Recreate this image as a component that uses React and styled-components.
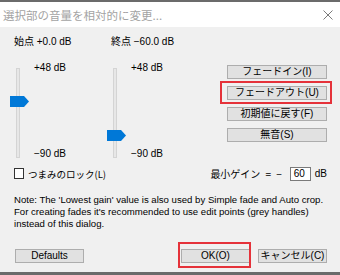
import styled, { createGlobalStyle } from 'styled-components'

const GlobalStyle = createGlobalStyle`
html, body {
  margin: 0;
  padding: 0;
  background: #ffffff;
}
* { box-sizing: border-box; }
`

const Window = styled.div`
width: 340px;
height: 275px;
display: flex;
flex-direction: column;
border-top: 2px solid #6b6b6b;
border-bottom: 3px solid #6b6b6b;
background: #f0f0f0;
font-family: "Liberation Sans", "Noto Sans CJK JP", sans-serif;
font-size: 10px;
color: #000;
overflow: hidden;
`

const TitleBar = styled.div`
height: 25px;
flex: none;
background: #ffffff;
display: flex;
align-items: center;
justify-content: space-between;
padding: 0 7px 0 3px;
color: #a3a3a3;
font-family: "Noto Sans CJK JP", sans-serif;
font-size: 11.5px;
`

const Content = styled.div`
flex: 1;
display: flex;
flex-direction: column;
padding: 8px 13px 0 10px;
`

const TopArea = styled.div`
display: flex;
`

const SliderGroup = styled.div`
width: 97px;
display: flex;
flex-direction: column;
`

const SliderLabel = styled.div`
height: 14px;
line-height: 14px;
padding-left: 4px;
margin-bottom: 12px;
white-space: nowrap;
`

const SliderBody = styled.div`
position: relative;
height: 100px;
display: flex;
`

const TrackColumn = styled.div`
position: relative;
width: 24px;
height: 100%;
`

const Track = styled.div`
position: absolute;
left: 6px;
top: 7px;
bottom: 3px;
width: 4px;
background: #e7e7e7;
border: 1px solid #d4d4d4;
`

const Thumb = styled.svg`
position: absolute;
left: 0;
`

const Scale = styled.div`
display: flex;
flex-direction: column;
justify-content: space-between;
& span {
  line-height: 14px;
  height: 14px;
}
`

const ButtonColumn = styled.div`
margin-left: auto;
margin-top: 30px;
width: 100px;
display: flex;
flex-direction: column;
gap: 7px;
`

const Button = styled.button`
position: relative;
height: 14px;
width: ${(p) => p.width || '100%'};
padding: 0;
background: #e1e1e1;
border: 1px solid #adadad;
font-family: "Liberation Sans", "Noto Sans CJK JP", sans-serif;
font-size: 10px;
line-height: 12px;
color: #000;
&::after {
  content: '';
  display: ${(p) => (p.marked ? 'block' : 'none')};
  position: absolute;
  top: ${(p) => p.mt || '-6px'};
  left: ${(p) => p.ml || '-8px'};
  right: ${(p) => p.mr || '-6px'};
  bottom: ${(p) => p.mb || '-5px'};
  border: 2px solid #e5323a;
}
`

const OptionRow = styled.div`
display: flex;
align-items: center;
margin-top: 5px;
height: 15px;
`

const Check = styled.label`
display: flex;
align-items: center;
gap: 4px;
padding-left: 4px;
font-family: "Noto Sans CJK JP", sans-serif;
font-size: 9.5px;
& span.box {
  width: 10px;
  height: 11px;
  border: 1px solid #333;
  background: #fff;
}
`

const Gain = styled.div`
margin-left: auto;
display: flex;
align-items: center;
gap: 4px;
& span.jp {
  font-family: "Noto Sans CJK JP", sans-serif;
  word-spacing: 3px;
}
`

const GainInput = styled.div`
width: 21px;
height: 14px;
border: 1px solid #7a7a7a;
background: #fff;
padding-left: 3px;
line-height: 12px;
margin-left: 4px;
`

const Note = styled.p`
margin: 13px 0 0 4px;
font-size: 9.6px;
line-height: 12px;
white-space: nowrap;
`

const BottomRow = styled.div`
display: flex;
align-items: center;
margin-top: auto;
margin-bottom: 9px;
padding-left: 5px;
& > :first-child {
  margin-right: auto;
}
`

const Close = () => (
  <svg width="10" height="10" viewBox="0 0 10 10">
    <path d="M0.5 0.5 L9.5 9.5 M9.5 0.5 L0.5 9.5" stroke="#7a7a7a" strokeWidth="1" />
  </svg>
)

const Slider = ({ label, thumbTop }) => (
  <SliderGroup>
    <SliderLabel>{label}</SliderLabel>
    <SliderBody>
      <TrackColumn>
        <Track />
        <Thumb width="19" height="11" viewBox="0 0 19 11" style={{ top: thumbTop }}>
          <path d="M0 0 H14 L19 5.5 L14 11 H0 Z" fill="#0078d7" />
        </Thumb>
      </TrackColumn>
      <Scale>
        <span>+48 dB</span>
        <span>−90 dB</span>
      </Scale>
    </SliderBody>
  </SliderGroup>
)

export default function App() {
  return (
    <Window>
      <GlobalStyle />
      <TitleBar>
        <span>選択部の音量を相対的に変更...</span>
        <Close />
      </TitleBar>
      <Content>
        <TopArea>
          <Slider label="始点 +0.0 dB" thumbTop={35} />
          <Slider label="終点 −60.0 dB" thumbTop={69} />
          <ButtonColumn>
            <Button>フェードイン(I)</Button>
            <Button marked>フェードアウト(U)</Button>
            <Button>初期値に戻す(F)</Button>
            <Button>無音(S)</Button>
          </ButtonColumn>
        </TopArea>
        <OptionRow>
          <Check>
            <span className="box" />
            つまみのロック(L)
          </Check>
          <Gain>
            <span className="jp">最小ゲイン = −</span>
            <GainInput>60</GainInput>
            <span>dB</span>
          </Gain>
        </OptionRow>
        <Note>
          Note: The 'Lowest gain' value is also used by Simple fade and Auto crop.
          <br />
          For creating fades it's recommended to use edit points (grey handles)
          <br />
          instead of this dialog.
        </Note>
        <BottomRow>
          <Button width="69px">Defaults</Button>
          <Button width="69px" marked mt="-8px" ml="-4px" mr="-2px" mb="-6px">OK(O)</Button>
          <Button width="69px" style={{ marginLeft: 8 }}>キャンセル(C)</Button>
        </BottomRow>
      </Content>
    </Window>
  )
}
